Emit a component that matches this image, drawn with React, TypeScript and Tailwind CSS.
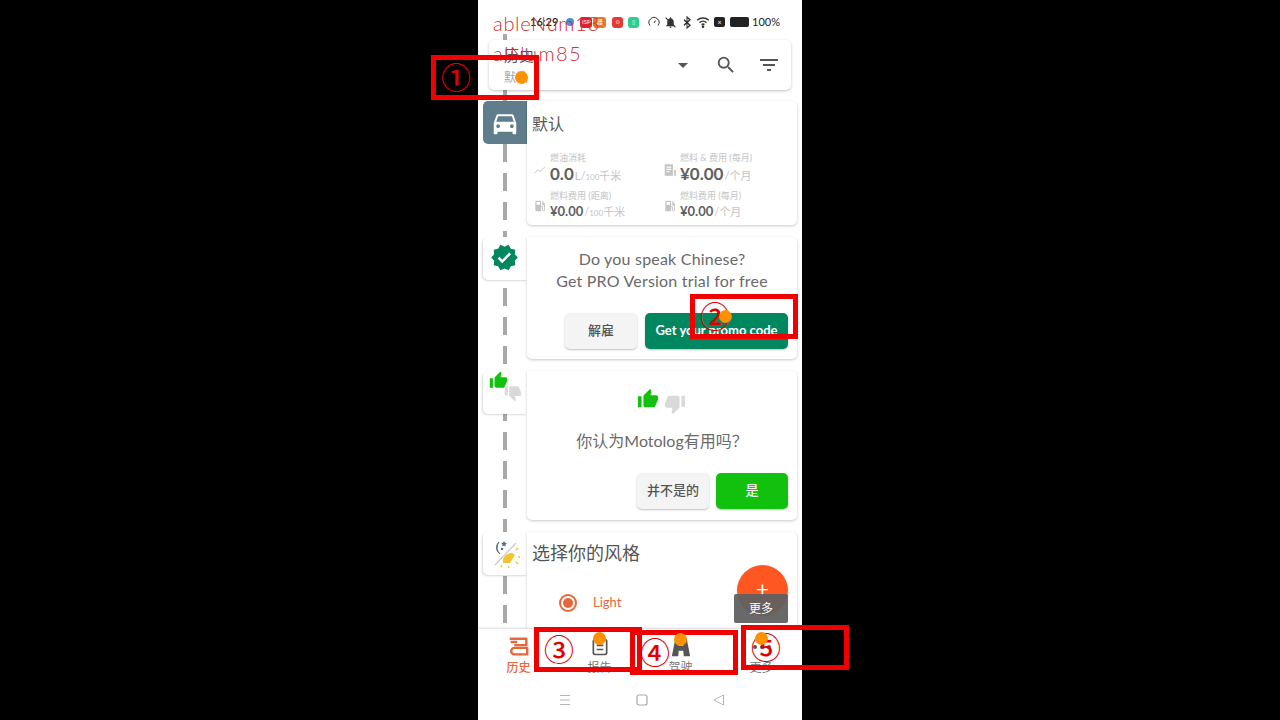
const cjk = { fontFamily: '"Lato", "Noto Sans CJK SC", sans-serif' };

function Car() {
  return (
    <svg viewBox="0 0 24 24" className="w-[30px] h-[30px]" fill="#fff">
      <path d="M18.92 6.01C18.72 5.42 18.16 5 17.5 5h-11c-.66 0-1.21.42-1.42 1.01L3 12v8c0 .55.45 1 1 1h1c.55 0 1-.45 1-1v-1h12v1c0 .55.45 1 1 1h1c.55 0 1-.45 1-1v-8l-2.08-5.99zM6.5 16c-.83 0-1.5-.67-1.5-1.5S5.67 13 6.5 13s1.5.67 1.5 1.5S7.33 16 6.5 16zm11 0c-.83 0-1.5-.67-1.5-1.5s.67-1.5 1.5-1.5 1.5.67 1.5 1.5-.67 1.5-1.5 1.5zM5 11l1.5-4.5h11L19 11H5z" />
    </svg>
  );
}

function Thumb({ down, color, size }: { down?: boolean; color: string; size: number }) {
  return (
    <svg viewBox="0 0 24 24" width={size} height={size} fill={color} className={down ? "rotate-180" : ""}>
      <path d="M1 21h4V9H1v12zm22-11c0-1.1-.9-2-2-2h-6.31l.95-4.57.03-.32c0-.41-.17-.79-.44-1.06L14.17 1 7.59 7.59C7.22 7.95 7 8.45 7 9v10c0 1.1.9 2 2 2h9c.83 0 1.54-.5 1.84-1.22l3.02-7.05c.09-.23.14-.47.14-.73v-2z" />
    </svg>
  );
}

function Pump() {
  return (
    <svg viewBox="0 0 24 24" className="w-[14px] h-[14px]" fill="#c4c4c4">
      <path d="M19.77 7.23l.01-.01-3.72-3.72L15 4.56l2.11 2.11c-.94.36-1.61 1.26-1.61 2.33 0 1.38 1.12 2.5 2.5 2.5.36 0 .69-.08 1-.21v7.21c0 .55-.45 1-1 1s-1-.45-1-1V14c0-1.1-.9-2-2-2h-1V5c0-1.1-.9-2-2-2H6c-1.1 0-2 .9-2 2v16h10v-7.5h1.5v5c0 1.38 1.12 2.5 2.5 2.5s2.5-1.12 2.5-2.5V9c0-.69-.28-1.32-.73-1.77zM12 10H6V5h6v5z" />
    </svg>
  );
}

function Stat({ icon, label, value, unit, big, w }: { icon: React.ReactNode; label: string; value: string; unit: React.ReactNode; big?: boolean; w: string }) {
  return (
    <div className={`flex items-center ${w}`}>
      <div className="w-[17px] flex justify-start shrink-0">{icon}</div>
      <div>
        <div className="text-[9px] leading-[11px] text-[#c4c4c4]">{label}</div>
        <div className={`flex items-baseline text-[#5f5f5f] ${big ? "leading-[22px]" : "leading-[20px]"}`}>
          <span className={big ? "text-[17px] font-bold" : "text-[13px] font-bold"}>{value}</span>
          <span className="text-[11px] text-[#c4c4c4] ml-[1px]">{unit}</span>
        </div>
      </div>
    </div>
  );
}

function Tab({ children, bg }: { children: React.ReactNode; bg?: string }) {
  return (
    <div className={`w-[44px] h-[43px] shrink-0 rounded-l-[5px] flex items-center justify-center ${bg ?? "bg-white shadow-[-1px_1px_2px_rgba(0,0,0,0.15)]"}`}>
      {children}
    </div>
  );
}

function Row({ tab, bg, className, children }: { tab: React.ReactNode; bg?: string; className: string; children: React.ReactNode }) {
  return (
    <div className="flex mb-3">
      <Tab bg={bg}>{tab}</Tab>
      <div className={`w-[270px] bg-white rounded-r-[5px] rounded-bl-[5px] shadow-[0_1px_3px_rgba(0,0,0,0.22)] ${className}`}>{children}</div>
    </div>
  );
}

function Red({ left, top, label }: { left: string; top: string; label: string }) {
  return (
    <div className={`absolute ${left} ${top} w-[108px] h-[45px] border-[5px] border-[#f00000]`}>
      <span className="absolute left-[5px] top-[0px] text-[#e00000] text-[30px] leading-[32px] font-medium" style={{ fontFamily: '"Noto Sans CJK SC", sans-serif' }}>{label}</span>
    </div>
  );
}

function Dot({ left, top }: { left: string; top: string }) {
  return <div className={`absolute ${left} ${top} w-[13px] h-[13px] rounded-full bg-[#ff9100]`} />;
}

function NavItem({ label, active, children }: { label: string; active?: boolean; children: React.ReactNode }) {
  return (
    <div className="flex-1 flex flex-col items-center pt-[7px]">
      <div className="h-[22px] flex items-center justify-center">{children}</div>
      <span className={`text-[12px] leading-[18px] mt-[1px] ${active ? "text-[#e8663a] font-medium" : "text-[#777]"}`}>{label}</span>
    </div>
  );
}

function AppIcon({ bg, ml, w, text }: { bg: string; ml: string; w: string; text?: string }) {
  return (
    <span className={`${ml} ${w} h-[11px] rounded-[3px] ${bg} flex items-center justify-center text-white text-[6px] leading-none`}>{text}</span>
  );
}

export default function App() {
  return (
    <div className="relative w-[1280px] h-[720px] bg-black overflow-hidden flex justify-center" style={cjk}>
      <div className="relative w-[324px] h-[720px] bg-white flex flex-col">
        {/* dashed timeline behind the cards */}
        <div className="absolute left-[25px] top-[29px] bottom-[91px] w-[4px] bg-[repeating-linear-gradient(to_bottom,#a8a8a8_0,#a8a8a8_18px,transparent_18px,transparent_28.8px)]" />

        {/* status bar */}
        <div className="relative h-[34px] mb-[6px] shrink-0 bg-white flex items-center pt-[10px] pl-[52px] pr-[22px] text-[11px] text-[#222]">
          <span className="font-semibold">16:29</span>
          <span className="ml-[8px] w-[8px] h-[8px] rounded-full bg-[#4a90d9]" />
          <AppIcon ml="ml-[6px]" w="w-[12px]" bg="bg-[#e02030]" text="ISP" />
          <AppIcon ml="ml-[1px]" w="w-[13px]" bg="bg-[#e8762a]" text="器" />
          <AppIcon ml="ml-[6px]" w="w-[11px]" bg="bg-[#e53935]" text="○" />
          <AppIcon ml="ml-[5px]" w="w-[11px]" bg="bg-[#2ecc8f]" text="▯" />
          <div className="ml-auto flex items-center">
            <svg viewBox="0 0 24 24" className="w-[12px] h-[12px]" fill="none" stroke="#333" strokeWidth="2"><path d="M4 19a10 10 0 1 1 16 0" /><path d="M12 14l3-5" /></svg>
            <svg viewBox="0 0 24 24" className="ml-[4px] w-[13px] h-[13px]" fill="#333"><path d="M12 22a2 2 0 0 0 2-2h-4a2 2 0 0 0 2 2zm6-6V11c0-3-1.6-5.6-4.5-6.300V4a1.500 1.500 0 0 0-3 0v.7C7.600 5.400 6 8 6 11v5l-2 2v1h16v-1z" /><path d="M3 3l18 18" stroke="#333" strokeWidth="2" /></svg>
            <svg viewBox="0 0 24 24" className="ml-[6px] w-[8px] h-[13px]" fill="none" stroke="#333" strokeWidth="3" preserveAspectRatio="none"><path d="M3 7l18 10-9 5V2l9 5L3 17" /></svg>
            <svg viewBox="0 0 24 24" className="ml-[5px] w-[14px] h-[14px]" fill="none" stroke="#333" strokeWidth="2.500"><path d="M2 9a15 15 0 0 1 20 0M6 13a9 9 0 0 1 12 0M9.500 16.500a4 4 0 0 1 5 0" /><circle cx="12" cy="20" r="1" fill="#333" /></svg>
            <span className="ml-[4px] w-[11px] h-[10px] rounded-[2px] bg-[#222] flex items-center justify-center text-white text-[7px] leading-none">×</span>
            <span className="ml-[5px] w-[19px] h-[10px] rounded-[2px] bg-[#222]" />
            <span className="text-[11px] ml-[3px]">100%</span>
          </div>
        </div>

        {/* header card */}
        <div className="relative z-10 shrink-0 mx-[11px] h-[50px] bg-white rounded-[5px] shadow-[0_1px_3px_rgba(0,0,0,0.25)] flex items-center pl-[15px] pr-[10px]">
          <div className="flex-1">
            <div className="text-[15px] leading-[22px] text-[#555]">历史</div>
            <div className="mt-[4px] text-[12px] leading-[16px] text-[#aaa]">默认</div>
          </div>
          <svg viewBox="0 0 24 24" className="w-[24px] h-[24px] mr-[20px]" fill="#555"><path d="M7 10l5 5 5-5z" /></svg>
          <svg viewBox="0 0 24 24" className="w-[22px] h-[22px] mr-[20px]" fill="#555"><path d="M15.500 14h-.79l-.28-.27A6.470 6.470 0 0 0 16 9.500 6.500 6.500 0 1 0 9.500 16c1.610 0 3.090-.59 4.230-1.570l.27.28v.79l5 4.990L20.490 19l-4.990-5zm-6 0C7.010 14 5 11.990 5 9.500S7.010 5 9.500 5 14 7.010 14 9.500 11.990 14 9.500 14z" /></svg>
          <svg viewBox="0 0 24 24" className="w-[24px] h-[24px]" fill="#555"><path d="M10 18h4v-2h-4v2zM3 6v2h18V6H3zm3 7h12v-2H6v2z" /></svg>
        </div>

        {/* timeline */}
        <div className="relative flex-1 min-h-0 overflow-hidden pl-[5px] pt-[11px]">
          <Row bg="bg-[#607d8b]" tab={<Car />} className="h-[124px] pl-[5px] pt-[10px]">
            <div className="text-[16px] leading-[26px] text-[#555]">默认</div>
            <div className="mt-[13px] flex flex-wrap pl-[1px]">
              <Stat w="w-[130px] h-[39px]" icon={<svg viewBox="0 0 24 24" className="w-[14px] h-[14px]" fill="none" stroke="#c4c4c4" strokeWidth="1.500"><path d="M2 18l6-6 4 3 9-9" /></svg>} label="燃油消耗" value="0.0" big unit={<span>L/<span className="text-[8px]">100</span>千米</span>} />
              <Stat w="w-[120px] h-[39px]" icon={<svg viewBox="0 0 24 24" className="w-[14px] h-[16px]" fill="#c4c4c4"><path d="M3 2h14v20H3zM19 12h3v10h-3z" /><path d="M6 7h8M6 11h8M6 15h5" stroke="#fff" strokeWidth="2" /></svg>} label="燃料 & 费用 (每月)" value="¥0.00" big unit="/个月" />
              <Stat w="w-[130px] h-[34px]" icon={<Pump />} label="燃料费用 (距离)" value="¥0.00" unit={<span>/<span className="text-[8px]">100</span>千米</span>} />
              <Stat w="w-[120px] h-[34px]" icon={<Pump />} label="燃料费用 (每月)" value="¥0.00" unit="/个月" />
            </div>
          </Row>

          <Row
            tab={
              <svg viewBox="0 0 24 24" className="w-[29px] h-[29px] -ml-[2px] -mt-[2px]" fill="#00875f">
                <path d="M23 12l-2.440-2.780.34-3.680-3.610-.82-1.890-3.180L12 3 8.600 1.540 6.710 4.720l-3.610.81.34 3.680L1 12l2.440 2.780-.34 3.690 3.610.82 1.890 3.180L12 21l3.400 1.460 1.890-3.180 3.610-.82-.34-3.680L23 12zm-12.910 4.720l-3.800-3.810 1.480-1.480 2.320 2.330 5.850-5.870 1.480 1.480-7.330 7.350z" />
              </svg>
            }
            className="h-[122px] flex flex-col"
          >
            <div className="mt-[11px] text-center text-[16px] leading-[22px] tracking-[0.2px] text-[#6a6a6a]">
              <div>Do you speak Chinese?</div>
              <div>Get PRO Version trial for free</div>
            </div>
            <div className="mt-auto mb-[10px] flex justify-end gap-[8px] pr-[9px]">
              <button className="w-[72px] h-[36px] rounded-[5px] bg-[#f4f4f4] shadow-[0_1px_2px_rgba(0,0,0,0.25)] text-[13px] font-medium text-[#555]">解雇</button>
              <button className="w-[143px] h-[36px] rounded-[5px] bg-[#00875f] shadow-[0_1px_2px_rgba(0,0,0,0.25)] text-[13px] font-bold text-white">Get your promo code</button>
            </div>
          </Row>

          <Row
            tab={
              <div className="relative w-[36px] h-[36px]">
                <div className="absolute left-[2px] top-[-4px]"><Thumb color="#12c10e" size={19} /></div>
                <div className="absolute left-[17px] top-[9px] -scale-x-100"><Thumb down color="#d9d9d9" size={18} /></div>
              </div>
            }
            className="h-[149px] flex flex-col"
          >
            <div className="mt-[17px] flex justify-center items-start gap-[5px] -ml-[1px]">
              <Thumb color="#12c10e" size={22} />
              <div className="mt-[5px]"><Thumb down color="#d9d9d9" size={22} /></div>
            </div>
            <div className="mt-[14px] text-center text-[16px] leading-[24px] text-[#6a6a6a]">你认为Motolog有用吗？</div>
            <div className="mt-auto mb-[11px] flex justify-end gap-[7px] pr-[9px]">
              <button className="w-[72px] h-[36px] rounded-[5px] bg-[#f4f4f4] shadow-[0_1px_2px_rgba(0,0,0,0.25)] text-[13px] font-medium text-[#555]">并不是的</button>
              <button className="w-[72px] h-[36px] rounded-[5px] bg-[#12c10e] shadow-[0_1px_2px_rgba(0,0,0,0.25)] text-[13px] font-medium text-white">是</button>
            </div>
          </Row>

          <Row
            tab={
              <svg viewBox="0 0 30 30" className="w-[30px] h-[30px]">
                <path d="M9 3a7.500 7.500 0 0 0 1 12 9 9 0 0 1-1-12z" fill="#4f6d7a" stroke="#4f6d7a" strokeWidth="0.800" />
                <path d="M14 2l.9 1.800 2 .3-1.450 1.400.35 2-1.800-.95-1.800.95.35-2L11.100 4.100l2-.3z" fill="#4f6d7a" />
                <circle cx="12" cy="10" r="1.200" fill="#4f6d7a" />
                <path d="M5 26L26 4" stroke="#c9c9c9" strokeWidth="1.200" />
                <path d="M13 24c-1-5 3-10 9-10l3 2-5 8z" fill="#f4c430" />
                <path d="M26 11l2-2M28 18h2M26 23l2 2M18 27l1 2M12 26l-1 2" stroke="#f4c430" strokeWidth="1.500" />
              </svg>
            }
            className="h-[110px] pl-[5px] pt-[8px]"
          >
            <div className="text-[18px] leading-[26px] text-[#555]">选择你的风格</div>
            <div className="mt-[27px] ml-[27px] flex items-center">
              <span className="w-[18px] h-[18px] rounded-full border-2 border-[#e8663a] flex items-center justify-center">
                <span className="w-[10px] h-[10px] rounded-full bg-[#e8663a]" />
              </span>
              <span className="ml-[16px] text-[13px] text-[#e8663a]">Light</span>
            </div>
          </Row>
        </div>

        {/* bottom nav */}
        <div className="relative z-10 shrink-0 h-[91px] bg-white shadow-[0_-1px_2px_rgba(0,0,0,0.15)] flex flex-col">
          <div className="flex h-[52px]">
            <NavItem label="历史" active>
              <svg viewBox="0 0 24 24" className="w-[22px] h-[22px]" fill="none" stroke="#e8663a" strokeWidth="2.600" strokeLinecap="round" strokeLinejoin="round">
                <path d="M3 3h17v7H8" /><path d="M21 13H7a3.500 3.500 0 0 0 0 7h14z" /><path d="M4 6.500h5" />
              </svg>
            </NavItem>
            <NavItem label="报告">
              <svg viewBox="0 0 24 24" className="w-[20px] h-[20px]" fill="none" stroke="#555" strokeWidth="2"><rect x="4" y="3" width="16" height="18" rx="2" /><path d="M8 10h8M8 15h8" /></svg>
            </NavItem>
            <NavItem label="驾驶">
              <svg viewBox="0 0 24 24" className="w-[22px] h-[22px]" fill="#555"><path d="M6 2h12l4 20h-7l-.5-6h-5L9 22H2zM10 6l-.400 5h4.800L14 6z" /></svg>
            </NavItem>
            <NavItem label="更多">
              <div className="flex gap-[3px]">
                <span className="w-[4px] h-[4px] rounded-full bg-[#555]" />
                <span className="w-[4px] h-[4px] rounded-full bg-[#555]" />
                <span className="w-[4px] h-[4px] rounded-full bg-[#555]" />
              </div>
            </NavItem>
          </div>
          {/* android nav */}
          <div className="flex-1 flex items-center justify-between pl-[80px] pr-[76px] pb-[2px]">
            <svg viewBox="0 0 14 14" className="w-[14px] h-[14px]" fill="none" stroke="#b5b5b5" strokeWidth="1"><path d="M2 2.500h10M2 7h10M2 11.500h10" /></svg>
            <svg viewBox="0 0 14 14" className="w-[14px] h-[14px]" fill="none" stroke="#a8a8a8" strokeWidth="1.200"><rect x="2" y="2" width="10" height="10" rx="2" /></svg>
            <svg viewBox="0 0 14 14" className="w-[14px] h-[14px]" fill="none" stroke="#b5b5b5" strokeWidth="1"><path d="M11.500 2v10L2 7z" /></svg>
          </div>
        </div>

        {/* FAB + tooltip */}
        <div className="absolute left-[259px] top-[565px] z-10 w-[51px] h-[51px] rounded-full bg-[#ff5722] flex justify-center pt-[12px] text-white text-[22px] leading-[24px] shadow-md">+</div>
        <div className="absolute left-[256px] top-[594px] z-10 w-[54px] h-[29px] rounded-[2px] bg-[#616161]/95 flex items-center justify-center text-white text-[12px]">更多</div>
      </div>

      {/* annotations */}
      <div className="absolute inset-0 z-20">
        <span className="absolute left-[493px] top-[10px] text-[#c83030] text-[20px] leading-[26px] tracking-[0.7px] font-light">ableNum13</span>
        <span className="absolute left-[493px] top-[40px] text-[#c83030] text-[20px] leading-[26px] tracking-[1.4px] font-light">alNum85</span>
        <Red left="left-[431px]" top="top-[55px]" label="①" />
        <Red left="left-[690px]" top="top-[294px]" label="②" />
        <Red left="left-[534px]" top="top-[627px]" label="③" />
        <Red left="left-[630px]" top="top-[630px]" label="④" />
        <Red left="left-[741px]" top="top-[625px]" label="⑤" />
        <Dot left="left-[515px]" top="top-[71px]" />
        <Dot left="left-[719px]" top="top-[310px]" />
        <Dot left="left-[593px]" top="top-[632px]" />
        <Dot left="left-[674px]" top="top-[633px]" />
        <Dot left="left-[755px]" top="top-[632px]" />
      </div>
    </div>
  );
}
